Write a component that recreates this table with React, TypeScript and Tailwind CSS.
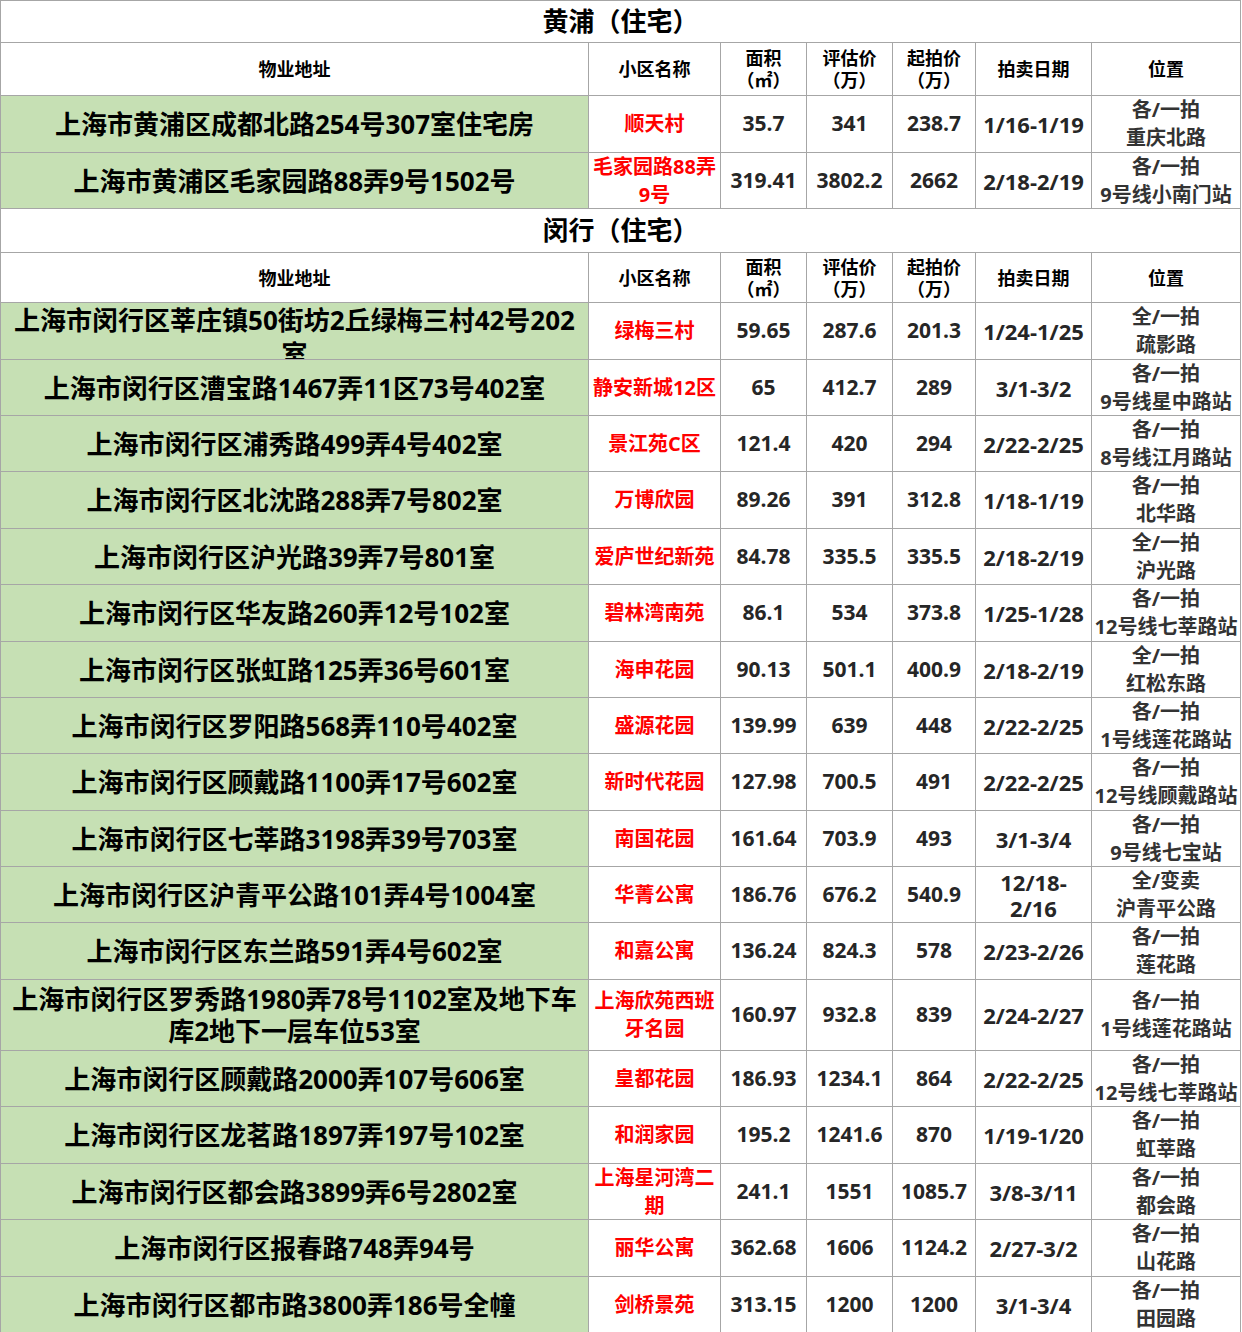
import { FC } from 'react'

interface Row {
  addr: string
  name: string
  area: string
  eval: string
  start: string
  date: string
  pos: string
  h: string
  addrClass?: string
}

const headers = [
  '物业地址',
  '小区名称',
  '面积\n（㎡）',
  '评估价\n（万）',
  '起拍价\n（万）',
  '拍卖日期',
  '位置',
]

const huangpu: Row[] = [
  { addr: '上海市黄浦区成都北路254号307室住宅房', name: '顺天村', area: '35.7', eval: '341', start: '238.7', date: '1/16-1/19', pos: '各/一拍\n重庆北路', h: 'h-[57px]' },
  { addr: '上海市黄浦区毛家园路88弄9号1502号', name: '毛家园路88弄\n9号', area: '319.41', eval: '3802.2', start: '2662', date: '2/18-2/19', pos: '各/一拍\n9号线小南门站', h: 'h-[56px]' },
]

const minhang: Row[] = [
  { addr: '上海市闵行区莘庄镇50街坊2丘绿梅三村42号202\n室', name: '绿梅三村', area: '59.65', eval: '287.6', start: '201.3', date: '1/24-1/25', pos: '全/一拍\n疏影路', h: 'h-[57px]', addrClass: 'items-start pt-0 leading-[34px]' },
  { addr: '上海市闵行区漕宝路1467弄11区73号402室', name: '静安新城12区', area: '65', eval: '412.7', start: '289', date: '3/1-3/2', pos: '各/一拍\n9号线星中路站', h: 'h-[56px]' },
  { addr: '上海市闵行区浦秀路499弄4号402室', name: '景江苑C区', area: '121.4', eval: '420', start: '294', date: '2/22-2/25', pos: '各/一拍\n8号线江月路站', h: 'h-[56px]' },
  { addr: '上海市闵行区北沈路288弄7号802室', name: '万博欣园', area: '89.26', eval: '391', start: '312.8', date: '1/18-1/19', pos: '各/一拍\n北华路', h: 'h-[57px]' },
  { addr: '上海市闵行区沪光路39弄7号801室', name: '爱庐世纪新苑', area: '84.78', eval: '335.5', start: '335.5', date: '2/18-2/19', pos: '全/一拍\n沪光路', h: 'h-[56px]' },
  { addr: '上海市闵行区华友路260弄12号102室', name: '碧林湾南苑', area: '86.1', eval: '534', start: '373.8', date: '1/25-1/28', pos: '各/一拍\n12号线七莘路站', h: 'h-[57px]' },
  { addr: '上海市闵行区张虹路125弄36号601室', name: '海申花园', area: '90.13', eval: '501.1', start: '400.9', date: '2/18-2/19', pos: '全/一拍\n红松东路', h: 'h-[56px]' },
  { addr: '上海市闵行区罗阳路568弄110号402室', name: '盛源花园', area: '139.99', eval: '639', start: '448', date: '2/22-2/25', pos: '各/一拍\n1号线莲花路站', h: 'h-[56px]' },
  { addr: '上海市闵行区顾戴路1100弄17号602室', name: '新时代花园', area: '127.98', eval: '700.5', start: '491', date: '2/22-2/25', pos: '各/一拍\n12号线顾戴路站', h: 'h-[57px]' },
  { addr: '上海市闵行区七莘路3198弄39号703室', name: '南国花园', area: '161.64', eval: '703.9', start: '493', date: '3/1-3/4', pos: '各/一拍\n9号线七宝站', h: 'h-[56px]' },
  { addr: '上海市闵行区沪青平公路101弄4号1004室', name: '华菁公寓', area: '186.76', eval: '676.2', start: '540.9', date: '12/18-\n2/16', pos: '全/变卖\n沪青平公路', h: 'h-[56px]' },
  { addr: '上海市闵行区东兰路591弄4号602室', name: '和嘉公寓', area: '136.24', eval: '824.3', start: '578', date: '2/23-2/26', pos: '各/一拍\n莲花路', h: 'h-[57px]' },
  { addr: '上海市闵行区罗秀路1980弄78号1102室及地下车\n库2地下一层车位53室', name: '上海欣苑西班\n牙名园', area: '160.97', eval: '932.8', start: '839', date: '2/24-2/27', pos: '各/一拍\n1号线莲花路站', h: 'h-[71px]' },
  { addr: '上海市闵行区顾戴路2000弄107号606室', name: '皇都花园', area: '186.93', eval: '1234.1', start: '864', date: '2/22-2/25', pos: '各/一拍\n12号线七莘路站', h: 'h-[56px]' },
  { addr: '上海市闵行区龙茗路1897弄197号102室', name: '和润家园', area: '195.2', eval: '1241.6', start: '870', date: '1/19-1/20', pos: '各/一拍\n虹莘路', h: 'h-[57px]' },
  { addr: '上海市闵行区都会路3899弄6号2802室', name: '上海星河湾二\n期', area: '241.1', eval: '1551', start: '1085.7', date: '3/8-3/11', pos: '各/一拍\n都会路', h: 'h-[56px]' },
  { addr: '上海市闵行区报春路748弄94号', name: '丽华公寓', area: '362.68', eval: '1606', start: '1124.2', date: '2/27-3/2', pos: '各/一拍\n山花路', h: 'h-[57px]' },
  { addr: '上海市闵行区都市路3800弄186号全幢', name: '剑桥景苑', area: '313.15', eval: '1200', start: '1200', date: '3/1-3/4', pos: '各/一拍\n田园路', h: 'h-[56px]' },
]

const grid = 'grid grid-cols-[588px_132px_86px_86px_83px_116px_149px]'
const cell = 'flex items-center justify-center text-center whitespace-pre-line overflow-hidden border-r border-b border-[#a6a6a6]'

const Title: FC<{ text: string; h: string }> = ({ text, h }) => (
  <div className={`${h} flex items-center justify-center border-r border-b border-[#a6a6a6] text-[26px] font-bold text-black`}>
    {text}
  </div>
)

const Header: FC<{ h: string }> = ({ h }) => (
  <div className={`${grid} ${h}`}>
    {headers.map((t, i) => (
      <div key={i} className={`${cell} text-[18px] font-bold leading-[22px] text-black`}>
        {t}
      </div>
    ))}
  </div>
)

const DataRow: FC<{ row: Row }> = ({ row }) => (
  <div className={`${grid} ${row.h}`}>
    <div className={`${cell} bg-[#c6e0b4] text-[26px] font-bold text-black px-1 ${row.addrClass ?? 'leading-[32px]'}`}>
      {row.addr}
    </div>
    <div className={`${cell} text-[20px] font-bold leading-[28px] text-[#ff0000] px-[2px]`}>{row.name}</div>
    <div className={`${cell} text-[21px] font-bold text-[#262626]`}>{row.area}</div>
    <div className={`${cell} text-[21px] font-bold text-[#262626]`}>{row.eval}</div>
    <div className={`${cell} text-[21px] font-bold text-[#262626]`}>{row.start}</div>
    <div className={`${cell} text-[22px] font-bold leading-[26px] text-[#262626]`}>{row.date}</div>
    <div className={`${cell} text-[20px] font-bold leading-[28px] text-[#333333] whitespace-pre`}>{row.pos}</div>
  </div>
)

const App: FC = (): JSX.Element => {
  return (
    <div className="w-[1242px] h-[1332px] overflow-hidden bg-white font-['Open_Sans','Noto_Sans_CJK_SC',sans-serif]">
      <div className="w-[1241px] border-l border-t border-[#a6a6a6]">
        <Title text="黄浦（住宅）" h="h-[42px]" />
        <Header h="h-[53px]" />
        {huangpu.map((r, i) => (
          <DataRow key={i} row={r} />
        ))}
        <Title text="闵行（住宅）" h="h-[44px]" />
        <Header h="h-[50px]" />
        {minhang.map((r, i) => (
          <DataRow key={i} row={r} />
        ))}
      </div>
    </div>
  )
}

export default App
